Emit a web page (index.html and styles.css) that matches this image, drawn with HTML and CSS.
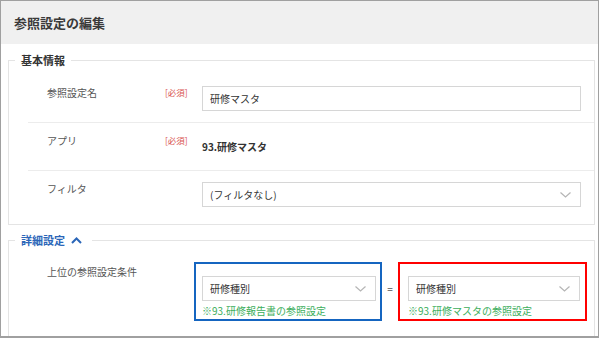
FILE: index.html
```html
<!DOCTYPE html>
<html lang="ja">
<head>
  <meta charset="UTF-8">
  <meta name="viewport" content="width=device-width, initial-scale=1">
  <title>参照設定の編集</title>
  <link rel="stylesheet" href="styles.css">
</head>
<body>

  <div class="dialog">
    <div class="dialog-header">参照設定の編集</div>

    <div class="dialog-body">

      <!-- 基本情報 -->
      <fieldset class="group">
        <legend class="group-title">基本情報</legend>
        <div class="rows">
          <div class="form-row first">
            <div class="form-label">参照設定名</div>
            <div class="required">[必須]</div>
            <div class="form-field">
              <div class="text-input">研修マスタ</div>
            </div>
          </div>
          <div class="form-row">
            <div class="form-label">アプリ</div>
            <div class="required">[必須]</div>
            <div class="form-field">
              <div class="form-value">93.研修マスタ</div>
            </div>
          </div>
          <div class="form-row last">
            <div class="form-label">フィルタ</div>
            <div class="required"></div>
            <div class="form-field">
              <div class="select">
                <span>(フィルタなし)</span>
                <svg class="chevron" width="11" height="6" viewBox="0 0 11 6"><polyline points="0.5,0.5 5.5,5 10.5,0.5" fill="none" stroke="#b5b5b5" stroke-width="1.2"/></svg>
              </div>
            </div>
          </div>
        </div>
      </fieldset>

      <!-- 詳細設定 -->
      <fieldset class="group detail">
        <legend class="group-title link">詳細設定
          <svg class="toggle" width="11" height="7" viewBox="0 0 11 7"><polyline points="1,6 5.5,1.5 10,6" fill="none" stroke="#2b66b8" stroke-width="2"/></svg>
        </legend>
        <div class="cond-row">
          <div class="cond-label">上位の参照設定条件</div>
          <div class="cond-box blue">
            <div class="select">
              <span>研修種別</span>
              <svg class="chevron" width="11" height="6" viewBox="0 0 11 6"><polyline points="0.5,0.5 5.5,5 10.5,0.5" fill="none" stroke="#b5b5b5" stroke-width="1.2"/></svg>
            </div>
            <div class="note">※93.研修報告書の参照設定</div>
          </div>
          <div class="eq">=</div>
          <div class="cond-box red">
            <div class="select">
              <span>研修種別</span>
              <svg class="chevron" width="11" height="6" viewBox="0 0 11 6"><polyline points="0.5,0.5 5.5,5 10.5,0.5" fill="none" stroke="#b5b5b5" stroke-width="1.2"/></svg>
            </div>
            <div class="note">※93.研修マスタの参照設定</div>
          </div>
        </div>
      </fieldset>

    </div>
  </div>

</body>
</html>
```

FILE: styles.css
```css
* {
  box-sizing: border-box;
}

body {
  margin: 0;
  font-family: "Noto Sans CJK JP", "Noto Sans", sans-serif;
  color: #333;
  background: #fff;
}

/* Dialog frame */
.dialog {
  width: 599px;
  height: 338px;
  border: 1px solid #a0a0a0;
  border-bottom-width: 2px;
  overflow: hidden;
}

.dialog-header {
  height: 43px;
  line-height: 43px;
  padding-left: 13px;
  background: #f0f0f0;
  font-size: 13px;
  font-weight: bold;
  color: #3a3a3a;
}

.dialog-body {
  padding: 0 3px 0 7px;
}

/* Groups */
.group {
  margin: 8px 0 0;
  padding: 0;
  min-width: 0;
  border: 1px solid #e4e4e4;
}

.group.detail {
  margin-top: 7px;
  height: 200px;
}

.group-title {
  margin-left: 6px;
  padding: 0 6px;
  font-size: 11px;
  line-height: 16px;
  font-weight: bold;
  color: #333;
}

.group-title.link {
  color: #2b66b8;
  padding-right: 10px;
}

.toggle {
  margin-left: 3px;
  vertical-align: 1px;
}

/* Rows */
.rows {
  margin-left: 19px;
}

.form-row {
  display: flex;
  align-items: flex-start;
  padding: 11px 13px 11px 19px;
  border-bottom: 1px solid #ececec;
}

.form-row.first {
  padding-top: 18px;
}

.form-row.last {
  border-bottom: none;
  padding-bottom: 17px;
}

.form-label {
  width: 118px;
  font-size: 10px;
  line-height: 14px;
  color: #555;
}

.required {
  width: 37px;
  font-size: 8.5px;
  line-height: 12px;
  color: #d9534f;
}

.form-field {
  flex: 1;
}

.text-input,
.select {
  height: 25px;
  border: 1px solid #d6d6d6;
  padding-left: 7px;
  font-size: 10px;
  line-height: 23px;
  color: #333;
  background: #fff;
}

.select {
  display: flex;
  align-items: center;
  justify-content: space-between;
  padding-right: 9px;
}

.chevron {
  display: block;
}

.form-value {
  font-size: 10px;
  line-height: 25px;
  font-weight: bold;
  color: #333;
}

/* Condition row */
.cond-row {
  display: flex;
  align-items: flex-start;
  padding: 14px 0 0 38px;
}

.cond-label {
  width: 147px;
  padding-top: 3px;
  font-size: 10px;
  line-height: 14px;
  color: #555;
}

.cond-box {
  width: 188px;
  border: 2px solid #1565c0;
  padding: 12px 4px 1px 6px;
}

.cond-box.red {
  width: 189px;
  border-color: #f00;
  padding: 12px 5px 1px 8px;
}

.eq {
  width: 16px;
  margin-top: 20px;
  text-align: center;
  font-size: 10px;
  line-height: 14px;
  color: #555;
}

.note {
  margin-top: 3px;
  font-size: 10px;
  line-height: 14px;
  color: #3cae5c;
  white-space: nowrap;
}
```
